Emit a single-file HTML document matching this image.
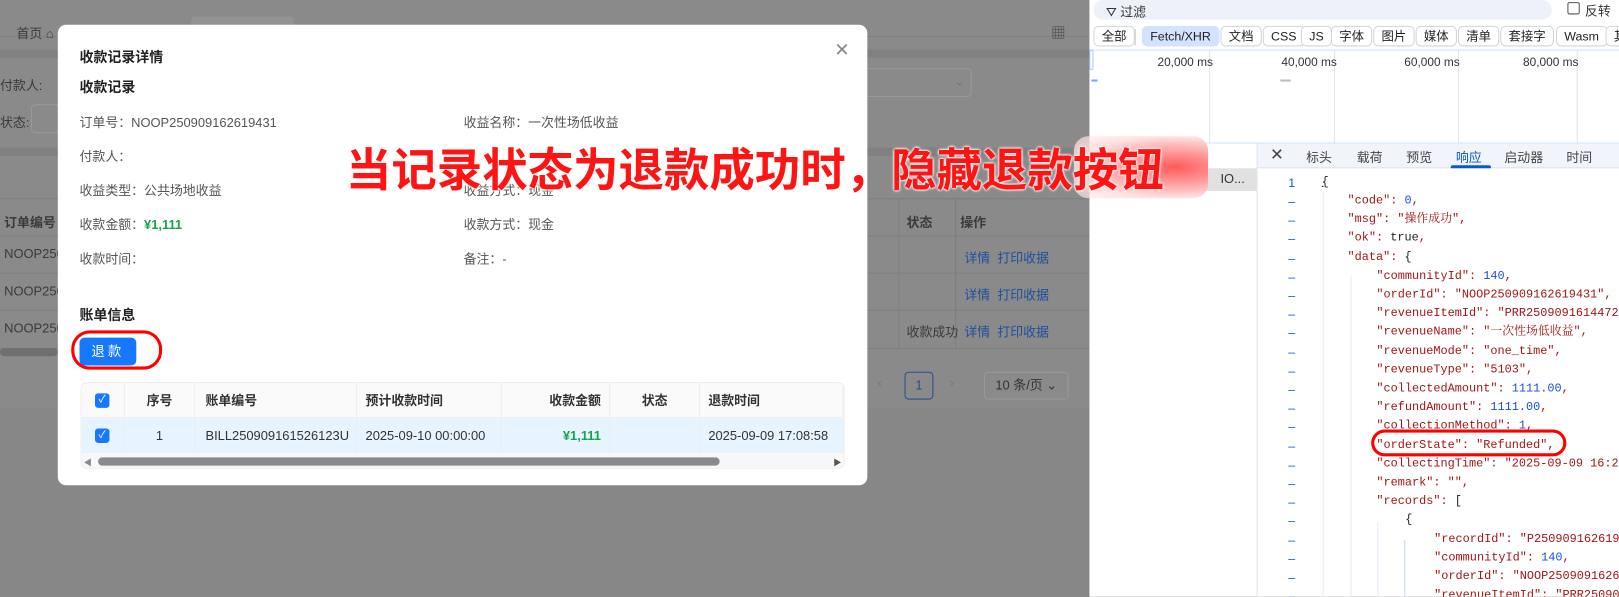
<!DOCTYPE html>
<html><head><meta charset="utf-8">
<style>
*{margin:0;padding:0;box-sizing:border-box}
html,body{width:1619px;height:597px;overflow:hidden;background:#8a8a8a}
#f{position:absolute;left:0;top:0;width:1568px;height:578px;transform:scale(1.03253);transform-origin:0 0;font-family:"Liberation Sans","Noto Sans CJK SC",sans-serif;font-size:12.5px;color:#333;overflow:hidden}
.a{position:absolute;white-space:nowrap}
.g{color:#3a3a3a}
.modal{position:absolute;left:56px;top:24px;width:784px;height:446px;background:#fff;border-radius:8px}
.lbl{color:#555;font-size:12.5px}
.b{font-weight:bold;font-size:13.5px;color:#222}
.th{position:absolute;top:0;height:34px;line-height:34px;font-weight:bold;border-right:1px solid #eee}
.td{position:absolute;top:34px;height:34px;line-height:34px;border-right:1px solid #e8eef5}
.cb{position:absolute;width:14px;height:14px;background:#1677ff;border-radius:3px;color:#fff;font-size:10px;line-height:14px;text-align:center}
.dt{position:absolute;left:0;top:0;width:513px;height:580px;background:#fff}
.btn{position:absolute;top:25px;height:20px;line-height:18px;border:1px solid #d0d4da;border-radius:5px;padding:0 7px;font-size:12px;color:#222;background:#fff}
.tab{position:absolute;top:142px;font-size:12.5px;color:#444}
.j{position:absolute;font-family:"Liberation Mono","Noto Serif CJK SC",monospace;font-size:11.5px;line-height:14px;height:14px;color:#a31515;white-space:nowrap}
.n{color:#1a4fd6}
.k{color:#222}
.ln{position:absolute;left:190px;width:12px;text-align:center;color:#1a4fd6;font-size:12px;line-height:14px}
</style></head><body><div id="f">
<!-- background page -->
<div class="a" style="left:0;top:35px;width:1055px;height:1px;background:#7e7e7e"></div>
<div class="a" style="left:185px;top:16px;width:100px;height:20px;background:#939393;border-radius:4px"></div>
<div class="a g" style="left:16px;top:22px">首页 ⌂</div>
<div class="a" style="left:1018px;top:22px;color:#444;font-size:14px">▦</div>
<div class="a" style="left:0;top:48px;width:1055px;height:8px;background:#808080"></div>
<div class="a g" style="left:0;top:72px">付款人:</div>
<div class="a g" style="left:0;top:108px">状态:</div>
<div class="a" style="left:30px;top:101px;width:40px;height:28px;border:1px solid #999;border-radius:4px"></div>
<div class="a" style="left:835px;top:66px;width:106px;height:28px;border:1px solid #999;border-radius:4px;color:#777;padding:4px 0 0 88px">⌄</div>
<div class="a" style="left:0;top:143px;width:1055px;height:8px;background:#808080"></div>
<div class="a" style="left:0;top:192px;width:1055px;height:1px;background:#7e7e7e"></div>
<div class="a g" style="left:4px;top:205px;font-weight:bold">订单编号</div>
<div class="a g" style="left:878px;top:205px;font-weight:bold">状态</div>
<div class="a g" style="left:930px;top:205px;font-weight:bold">操作</div>
<div class="a" style="left:870px;top:192px;width:1px;height:145px;background:#7e7e7e"></div>
<div class="a" style="left:925px;top:192px;width:1px;height:145px;background:#7e7e7e"></div>
<div class="a" style="left:0;top:228px;width:1055px;height:1px;background:#7e7e7e"></div>
<div class="a" style="left:0;top:264px;width:1055px;height:1px;background:#7e7e7e"></div>
<div class="a" style="left:0;top:300px;width:1055px;height:1px;background:#7e7e7e"></div>
<div class="a" style="left:0;top:337px;width:1055px;height:1px;background:#7e7e7e"></div>
<div class="a g" style="left:4px;top:239px">NOOP250</div>
<div class="a g" style="left:4px;top:275px">NOOP250</div>
<div class="a g" style="left:4px;top:311px">NOOP250</div>
<div class="a" style="left:934px;top:239px;color:#1d4fa0">详情&nbsp; 打印收据</div>
<div class="a" style="left:934px;top:275px;color:#1d4fa0">详情&nbsp; 打印收据</div>
<div class="a g" style="left:878px;top:311px">收款成功</div>
<div class="a" style="left:934px;top:311px;color:#1d4fa0">详情&nbsp; 打印收据</div>
<div class="a" style="left:0;top:337px;width:56px;height:8px;background:#6f6f6f;border-radius:4px"></div>
<div class="a" style="left:876px;top:360px;width:28px;height:27px;border:1px solid #2a4f8a;border-radius:4px;text-align:center;line-height:25px;color:#2a4f8a">1</div>
<div class="a" style="left:850px;top:364px;color:#777">‹</div>
<div class="a" style="left:920px;top:364px;color:#777">›</div>
<div class="a" style="left:953px;top:360px;width:82px;height:27px;border:1px solid #999;border-radius:4px;line-height:25px;padding-left:10px;color:#333">10 条/页 ⌄</div>
<div class="a" style="left:0;top:395px;width:1055px;height:183px;background:#878787"></div>

<!-- modal -->
<div class="modal">
<div class="a b" style="left:21px;top:20px">收款记录详情</div>
<div class="a" style="left:752px;top:14px;font-size:18px;color:#888">✕</div>
<div class="a b" style="left:21px;top:49px">收款记录</div>
<div class="a lbl" style="left:21px;top:84px">订单号：NOOP250909162619431</div>
<div class="a lbl" style="left:393px;top:84px">收益名称：一次性场低收益</div>
<div class="a lbl" style="left:21px;top:117px">付款人：</div>
<div class="a lbl" style="left:21px;top:150px">收益类型：公共场地收益</div>
<div class="a lbl" style="left:393px;top:150px">收益方式：现金</div>
<div class="a lbl" style="left:21px;top:183px">收款金额：<span style="color:#16a34a;font-weight:bold">¥1,111</span></div>
<div class="a lbl" style="left:393px;top:183px">收款方式：现金</div>
<div class="a lbl" style="left:21px;top:216px">收款时间：</div>
<div class="a lbl" style="left:393px;top:216px">备注：-</div>
<div class="a b" style="left:21px;top:270px">账单信息</div>
<div class="a" style="left:21px;top:303px;width:55px;height:27px;background:#1677ff;border-radius:5px;color:#fff;text-align:center;line-height:27px;font-size:13px;letter-spacing:3px">退款</div>
<div class="a" style="left:13px;top:296px;width:88px;height:38px;border:3px solid #f00;border-radius:18px"></div>
<div class="a" style="left:22px;top:346px;width:740px;height:84px;border:1px solid #eee;border-radius:6px;overflow:hidden">
 <div class="a" style="left:0;top:0;width:740px;height:34px;background:#fafafa;border-bottom:1px solid #eee"></div>
 <div class="a" style="left:0;top:34px;width:740px;height:34px;background:#e6f4ff"></div>
 <div class="cb" style="left:13px;top:10px">✓</div>
 <div class="cb" style="left:13px;top:44px">✓</div>
 <div class="th" style="left:42px;width:68px;text-align:center">序号</div>
 <div class="th" style="left:110px;width:157px;padding-left:10px">账单编号</div>
 <div class="th" style="left:267px;width:140px;padding-left:8px">预计收款时间</div>
 <div class="th" style="left:407px;width:105px;text-align:right;padding-right:8px">收款金额</div>
 <div class="th" style="left:512px;width:87px;text-align:center">状态</div>
 <div class="th" style="left:599px;width:139px;padding-left:8px">退款时间</div>
 <div class="a" style="left:0;top:0;width:42px;height:68px;border-right:1px solid #eee"></div>
 <div class="td" style="left:42px;width:68px;text-align:center">1</div>
 <div class="td" style="left:110px;width:157px;padding-left:10px">BILL250909161526123U</div>
 <div class="td" style="left:267px;width:140px;padding-left:8px">2025-09-10 00:00:00</div>
 <div class="td" style="left:407px;width:105px;text-align:right;padding-right:8px;color:#16a34a;font-weight:bold">¥1,111</div>
 <div class="td" style="left:512px;width:87px"></div>
 <div class="td" style="left:599px;width:139px;padding-left:8px">2025-09-09 17:08:58</div>
 <div class="a" style="left:0;top:68px;width:740px;height:16px;background:#f7f7f7"></div>
 <div class="a" style="left:2px;top:72px;color:#888;font-size:8px">◀</div>
 <div class="a" style="left:16px;top:72px;width:602px;height:8px;background:#8a8a8a;border-radius:4px"></div>
 <div class="a" style="left:728px;top:72px;color:#555;font-size:8px">▶</div>
</div>
</div>

<!-- devtools -->
<div class="a" style="left:1055px;top:0;width:513px;height:580px;overflow:hidden">
<div class="dt"></div>
<div class="a" style="left:4px;top:0;width:444px;height:19px;background:#edf1f9;border-radius:10px"></div>
<div class="a" style="left:16px;top:1px;font-size:12.5px;color:#333">⛛ 过滤</div>
<div class="a" style="left:463px;top:2px;width:12px;height:12px;border:1px solid #555;border-radius:2px"></div>
<div class="a" style="left:480px;top:0;font-size:12.5px">反转</div>
<div class="btn" style="left:4px">全部</div>
<div class="a" style="left:44px;top:28px;width:1px;height:16px;background:#ccc"></div>
<div class="btn" style="left:51px;background:#d3e3fd;border-color:#d3e3fd">Fetch/XHR</div>
<div class="btn" style="left:127px">文档</div>
<div class="btn" style="left:168px">CSS</div>
<div class="btn" style="left:205px">JS</div>
<div class="btn" style="left:234px">字体</div>
<div class="btn" style="left:275px">图片</div>
<div class="btn" style="left:316px">媒体</div>
<div class="btn" style="left:357px">清单</div>
<div class="btn" style="left:398px">套接字</div>
<div class="btn" style="left:452px">Wasm</div>
<div class="btn" style="left:500px">其</div>
<div class="a" style="left:0;top:48px;width:513px;height:1px;background:#d3e3fd"></div>
<div class="a" style="left:0;top:48px;width:4px;height:20px;border:1px solid #a8c7fa;border-radius:2px"></div>
<div class="a" style="left:2px;top:77px;width:6px;height:2px;background:#7aa7f0"></div>
<div class="a" style="left:185px;top:77px;width:10px;height:2px;background:#bbb"></div>
<div class="a" style="left:116px;top:49px;width:1px;height:89px;background:#e3e3e3"></div>
<div class="a" style="left:237px;top:49px;width:1px;height:89px;background:#e3e3e3"></div>
<div class="a" style="left:357px;top:49px;width:1px;height:89px;background:#e3e3e3"></div>
<div class="a" style="left:472px;top:49px;width:1px;height:89px;background:#e3e3e3"></div>
<div class="a" style="left:66px;top:55px;font-size:11.5px">20,000 ms</div>
<div class="a" style="left:186px;top:55px;font-size:11.5px">40,000 ms</div>
<div class="a" style="left:305px;top:55px;font-size:11.5px">60,000 ms</div>
<div class="a" style="left:420px;top:55px;font-size:11.5px">80,000 ms</div>
<div class="a" style="left:0;top:138px;width:513px;height:1px;background:#d3e3fd"></div>
<div class="a" style="left:162px;top:139px;width:351px;height:24px;background:#f1f4fa;border-bottom:1px solid #dde3ee"></div>
<div class="a" style="left:162px;top:139px;width:1px;height:441px;background:#dde3ee"></div>
<div class="a" style="left:0;top:163px;width:162px;height:22px;background:#e1e1e1"></div>
<div class="a" style="left:127px;top:166px;font-size:12.5px">IO...</div>
<div class="a" style="left:175px;top:140px;font-size:16px;color:#444">✕</div>
<div class="tab" style="left:210px">标头</div>
<div class="tab" style="left:259px">载荷</div>
<div class="tab" style="left:307px">预览</div>
<div class="tab" style="left:355px;color:#0b57d0">响应</div>
<div class="a" style="left:350px;top:160px;width:39px;height:3px;background:#0b57d0;border-radius:2px 2px 0 0"></div>
<div class="tab" style="left:402px">启动器</div>
<div class="tab" style="left:462px">时间</div>
<div class="a" style="left:226px;top:185px;width:1px;height:395px;background:#e4eaf5"></div>
<div class="a" style="left:253px;top:268px;width:1px;height:312px;background:#e4eaf5"></div>
<div class="a" style="left:279px;top:505px;width:1px;height:75px;background:#e4eaf5"></div>
<div class="a" style="left:305px;top:523px;width:1px;height:57px;background:#c5d6f5"></div>
<div class="ln" style="top:170px">1</div>
<div class="j k" style="left:225px;top:170px;text-decoration:underline">{</div>
<div id="jl"></div>
</div>
<div class="a" style="left:1328px;top:416px;width:189px;height:26px;border:3px solid #f00;border-radius:13px"></div>

<!-- annotation -->
<div class="a" style="left:1040px;top:132px;width:130px;height:60px;border-radius:14px;background:radial-gradient(ellipse at 75% 50%,#ff5a5a 0%,#ff9a9a 35%,rgba(255,220,220,.85) 70%,rgba(255,240,240,.6) 100%)"></div>
<div class="a" style="left:335px;top:133px;font-size:44px;font-weight:bold;color:#ff1414;font-family:'Noto Sans CJK SC',sans-serif;line-height:56px;text-shadow:0 0 2px #fff,0 0 2px #fff,0 0 3px #fff">当记录状态为退款成功时，隐藏退款按钮</div>
</div>
<script>
var L=[[1,'"code": <span class="n">0</span>,'],[1,'"msg": "操作成功",'],[1,'"ok": <span class="k">true</span>,'],[1,'"data": <span class="k">{</span>'],
[2,'"communityId": <span class="n">140</span>,'],[2,'"orderId": "NOOP250909162619431",'],[2,'"revenueItemId": "PRR250909161447290",'],[2,'"revenueName": "一次性场低收益",'],
[2,'"revenueMode": "one_time",'],[2,'"revenueType": "5103",'],[2,'"collectedAmount": <span class="n">1111.00</span>,'],[2,'"refundAmount": <span class="n">1111.00</span>,'],
[2,'"collectionMethod": <span class="n">1</span>,'],[2,'"orderState": "Refunded",'],[2,'"collectingTime": "2025-09-09 16:26:19",'],[2,'"remark": "",'],[2,'"records": <span class="k">[</span>'],
[3,'<span class="k">{</span>'],[4,'"recordId": "P250909162619431",'],[4,'"communityId": <span class="n">140</span>,'],[4,'"orderId": "NOOP250909162619431",'],[4,'"revenueItemId": "PRR250909161447290",']];
var X=[0,250,278,306,334],h='';
for(var i=0;i<L.length;i++){var t=188+i*18.2;h+='<div class="ln" style="top:'+t+'px">–</div><div class="j" style="left:'+X[L[i][0]]+'px;top:'+t+'px">'+L[i][1]+'</div>';}
document.getElementById('jl').outerHTML=h;
</script>
</body></html>
